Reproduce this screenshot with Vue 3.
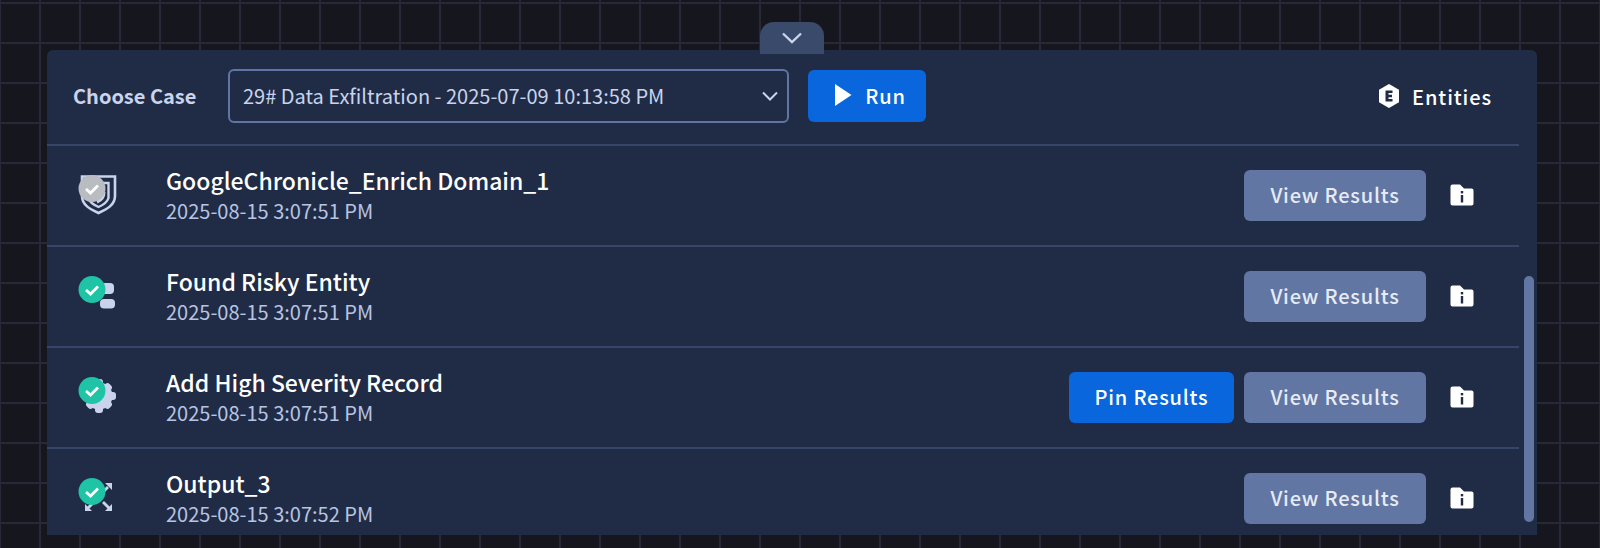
<template>
  <div class="page">
    <div class="panel">
      <button class="collapse-tab">
        <svg width="22" height="14" viewBox="0 0 22 14"><path d="M2 2.5 L11 11 L20 2.5" fill="none" stroke="#c9d4ec" stroke-width="2.4"/></svg>
      </button>

      <div class="toolbar">
        <div class="case-label">Choose Case</div>
        <div class="case-select">
          <span class="case-value">29# Data Exfiltration - 2025-07-09 10:13:58 PM</span>
          <svg width="18" height="12" viewBox="0 0 18 12"><path d="M2 2.5 L9 9.5 L16 2.5" fill="none" stroke="#c9d4ec" stroke-width="2"/></svg>
        </div>
        <button class="btn btn-run">
          <svg width="18" height="24" viewBox="0 0 18 24"><path d="M1 1 L17.5 12 L1 23 Z" fill="#fff"/></svg>
          Run
        </button>
        <div class="entities">
          <svg width="22" height="26" viewBox="0 0 22 26">
            <path d="M11 1 L21 6.7 V19.3 L11 25 L1 19.3 V6.7 Z" fill="#fff"/>
            <path d="M7.5 7.5 H14.5 V10 H10.5 V11.8 H14 V14.2 H10.5 V16 H14.5 V18.5 H7.5 Z" fill="#202c46"/>
          </svg>
          Entities
        </div>
      </div>

      <div class="rows">
        <div v-for="row in rows" :key="row.name" class="row">
          <div class="node-icon">
            <svg v-if="row.icon === 'shield'" width="40" height="42" viewBox="0 0 40 42">
              <path d="M5 1.5 H38 V21 C38 30 30 34 21.5 38 C13 34 5 30 5 21 Z" fill="none" stroke="#c9d4ec" stroke-width="2.6"/>
              <path d="M11 23 C13 28 17 30 21.5 32 C26 30 30 28 31.5 23 V8 H24" fill="none" stroke="#c9d4ec" stroke-width="2.4"/>
              <path d="M20 27 C25 25 27 22 27 17" fill="none" stroke="#c9d4ec" stroke-width="3"/>
              <circle cx="15" cy="13.5" r="13.5" fill="#b9bcc0"/>
              <path d="M9 14 L13.5 18 L21 10.5" fill="none" stroke="#fff" stroke-width="2.8"/>
            </svg>
            <svg v-else-if="row.icon === 'flow'" width="40" height="42" viewBox="0 0 40 42">
              <rect x="24" y="7" width="13" height="11" rx="4" fill="#c9d4ec"/>
              <rect x="23" y="23" width="15" height="9.5" rx="4" fill="#c9d4ec"/>
              <circle cx="15" cy="13.5" r="13.5" fill="#1fc4a6"/>
              <path d="M9 14 L13.5 18 L21 10.5" fill="none" stroke="#fff" stroke-width="2.8"/>
            </svg>
            <svg v-else-if="row.icon === 'gear'" width="40" height="42" viewBox="0 0 40 42">
              <circle cx="22" cy="19" r="13.5" fill="#c9d4ec"/>
              <g fill="#c9d4ec">
                <rect x="18" y="2" width="8" height="34" rx="3"/>
                <rect x="5" y="15" width="34" height="8" rx="3"/>
                <rect x="18" y="3" width="8" height="32" rx="3" transform="rotate(45 22 19)"/>
                <rect x="18" y="3" width="8" height="32" rx="3" transform="rotate(-45 22 19)"/>
              </g>
              <circle cx="15" cy="13.5" r="13.5" fill="#1fc4a6"/>
              <path d="M9 14 L13.5 18 L21 10.5" fill="none" stroke="#fff" stroke-width="2.8"/>
            </svg>
            <svg v-else width="40" height="42" viewBox="0 0 40 42">
              <g fill="#c9d4ec">
                <path d="M28 5 H35 V12 Z"/>
                <path d="M35 33 H28 L35 26 Z"/>
                <path d="M8 33 H15 L8 26 Z"/>
              </g>
              <g fill="none" stroke="#c9d4ec" stroke-width="2.8">
                <path d="M25 15 L31 9"/>
                <path d="M26 24 L32 30"/>
                <path d="M17 24 L11 30"/>
              </g>
              <circle cx="15" cy="13.5" r="13.5" fill="#1fc4a6"/>
              <path d="M9 14 L13.5 18 L21 10.5" fill="none" stroke="#fff" stroke-width="2.8"/>
            </svg>
          </div>
          <div class="row-text">
            <div class="row-name">{{ row.name }}</div>
            <div class="row-time">{{ row.time }}</div>
          </div>
          <button v-if="row.pin" class="btn btn-pin">Pin Results</button>
          <button class="btn btn-view">View Results</button>
          <svg class="info-icon" width="24" height="22" viewBox="0 0 24 22">
            <path d="M2.5 0.5 H10 L14 4.5 H21.5 A2 2 0 0 1 23.5 6.5 V19.5 A2 2 0 0 1 21.5 21.5 H2.5 A2 2 0 0 1 0.5 19.5 V2.5 A2 2 0 0 1 2.5 0.5 Z" fill="#fff"/>
            <rect x="10.8" y="7" width="2.4" height="2.4" fill="#202c46"/>
            <rect x="10.8" y="11" width="2.4" height="7.5" fill="#202c46"/>
          </svg>
        </div>
      </div>

      <div class="scroll-thumb"></div>
    </div>
  </div>
</template>

<script setup>
const rows = [
  { name: 'GoogleChronicle_Enrich Domain_1', time: '2025-08-15 3:07:51 PM', icon: 'shield' },
  { name: 'Found Risky Entity', time: '2025-08-15 3:07:51 PM', icon: 'flow' },
  { name: 'Add High Severity Record', time: '2025-08-15 3:07:51 PM', icon: 'gear', pin: true },
  { name: 'Output_3', time: '2025-08-15 3:07:52 PM', icon: 'expand' }
]
</script>

<style>
html, body { margin: 0; background: #16161f; }
</style>

<style scoped>
.page {
  height: 548px; box-sizing: border-box; padding: 50px 63px 13px 47px; overflow: hidden;
  background-color: #16161f;
  background-image:
    linear-gradient(#292838 2px, transparent 2px),
    linear-gradient(90deg, #292838 2px, transparent 2px);
  background-size: 40px 40px;
  background-position: -1px 2px;
  font-family: "Noto Sans CJK SC", "Noto Sans", sans-serif;
}

.panel {
  position: relative; height: 100%; box-sizing: border-box;
  background: #202c46; border-radius: 6px 6px 0 0;
  padding-right: 18px;
}

.collapse-tab {
  position: absolute; left: 713px; top: -28px;
  width: 64px; height: 32px; padding: 0; border: none;
  background: #3a4a6b; border-radius: 14px 14px 0 0;
  display: flex; align-items: center; justify-content: center;
}

.toolbar {
  height: 96px; box-sizing: border-box; border-bottom: 2px solid #36456a;
  display: flex; align-items: center; padding: 0 0 2px 26px;
}

.case-label { width: 155px; margin-bottom: 2px; font-size: 20px; font-weight: 700; color: #c9d4ec; }

.case-select {
  width: 561px; height: 54px; box-sizing: border-box;
  border: 2px solid #5f75a3; border-radius: 6px; padding: 0 8px 0 13px;
  display: flex; align-items: center; justify-content: space-between;
  font-size: 20px; color: #c9d4ec;
}
.case-value { margin-bottom: 2px; }

.btn {
  border: none; border-radius: 6px; height: 51px; box-sizing: border-box; padding: 0 0 2px;
  font-family: inherit; font-size: 20px; font-weight: 500; letter-spacing: 0.8px;
  color: #fff;
}

.btn-run {
  width: 118px; height: 52px; margin-left: 19px; background: #0a66dc;
  display: flex; align-items: center; justify-content: center; gap: 13px; padding: 0 6px 2px 12px;
}

.entities {
  margin-left: auto; margin-right: 27px;
  display: flex; align-items: center; gap: 12px;
  font-size: 20px; font-weight: 500; letter-spacing: 0.9px; color: #fff;
}

.rows { height: 389px; overflow: hidden; }

.row {
  height: 101px; box-sizing: border-box; border-bottom: 2px solid #36456a;
  display: flex; align-items: center; gap: 10px; padding: 0 15px 0 30px;
}

.node-icon { width: 40px; height: 42px; margin-right: 39px; }

.row-text { flex: 1; }
.row-name { font-size: 23px; font-weight: 500; line-height: 30px; color: #fff; }
.row-time { font-size: 20px; line-height: 30px; margin-top: 1px; color: #b7c4e2; }

.btn-pin { width: 165px; background: #0a66dc; }
.btn-view { width: 182px; background: #6276a3; margin-right: 14px; color: #e6ebf6; }
.info-icon { margin: 0 30px 1px 0; }

.scroll-thumb {
  position: absolute; right: 3px; top: 226px;
  width: 10px; height: 246px; border-radius: 5px; background: #6276a3;
}
</style>
